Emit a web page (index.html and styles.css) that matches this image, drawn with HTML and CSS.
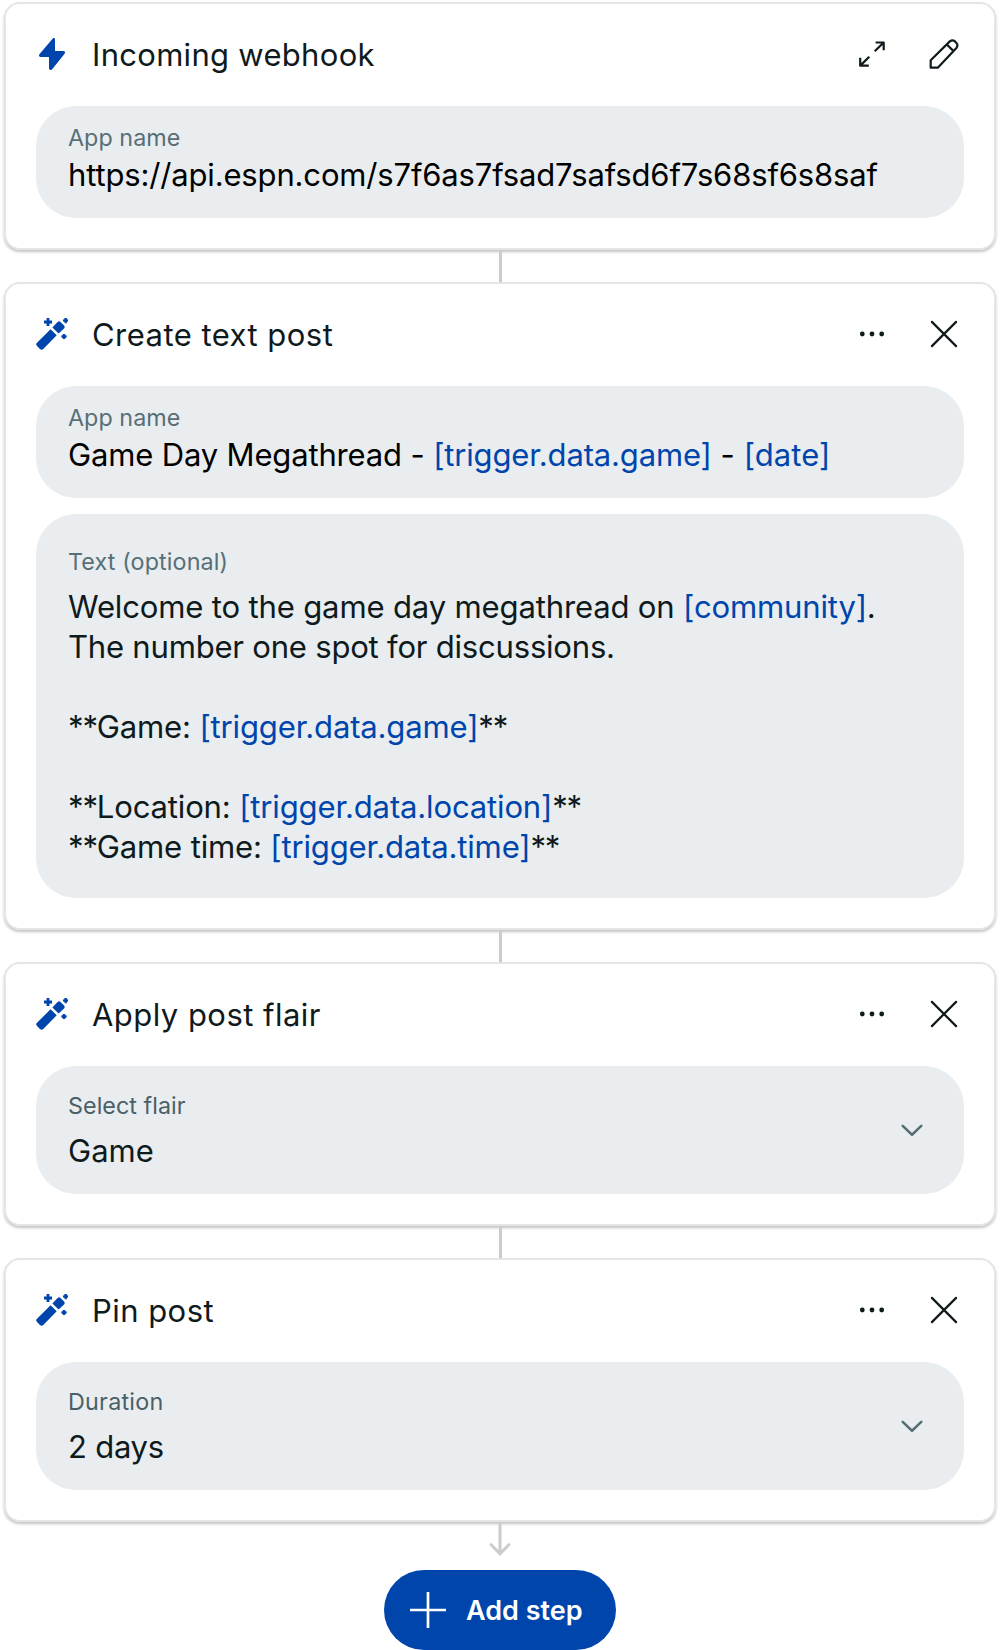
FILE: index.html
```html
<!DOCTYPE html>
<html lang="en">
<head>
<meta charset="utf-8">
<title>Automation steps</title>
<link rel="stylesheet" href="styles.css">
</head>
<body>
<svg class="defs" width="0" height="0" aria-hidden="true">
  <symbol id="wand" viewBox="0 0 32 32">
    <path d="M14.6 11.2 20.7 17.3 7.3 30.9Q5.6 32.5 3.9 30.9L1 28Q-.6 26.3 1 24.7Z"/>
    <path d="M16.4 9.4 22.6 15.6 28.1 10.5Q29.5 9 28.1 7.6L24.5 3.9Q23 2.5 21.6 3.9Z"/>
    <path d="M10.6 0h2.8v2.6H16v2.8h-2.6V8h-2.8V5.4H8V2.6h2.6z"/>
    <path d="M28.4 0h2.4l.2 1.3 1.2.2v2l-1.2.3-.3 1.4h-2l-.3-1.4-1.4-.3V1.5l1.3-.2z"/>
    <path d="M26.8 15.9h2.3l.3 1.3 1.3.3v2l-1.3.3-.3 1.3h-2.2l-.3-1.3-1.3-.3v-2l1.3-.3z"/>
  </symbol>
  <symbol id="more" viewBox="0 0 32 32">
    <circle cx="6.3" cy="16" r="2.4"/><circle cx="16" cy="16" r="2.4"/><circle cx="25.7" cy="16" r="2.4"/>
  </symbol>
  <symbol id="close" viewBox="0 0 32 32"><path d="M3.9 3.9 28.1 28.1M28.1 3.9 3.9 28.1"/></symbol>
  <symbol id="chevron" viewBox="0 0 32 32"><path d="M6.7 11.9 16 20.8 25.3 11.9"/></symbol>
</svg>

<main class="flow">
  <section class="card">
    <header class="card-head">
      <svg class="icon brand" viewBox="0 0 32 32"><path d="M16.8.5C17.6-.4 19 .1 19 1.2V13H27.3C29.1 13 29.6 14.5 28.6 15.8L16.2 31.2C15 32.6 13 32 13 30.6V19H4.9C3 19 2.5 17.4 3.4 16.2Z"/></svg>
      <h2 class="title title-webhook">Incoming webhook</h2>
      <div class="actions">
        <svg class="icon line" viewBox="0 0 32 32"><path d="M19.6 4.5H27.7V12.2M27.4 4.8 18.7 13.3M4.2 19.7V27.7H12.8M4.5 27.4 13.3 18.7"/></svg>
        <svg class="icon line" viewBox="0 0 32 32"><path d="M2.7 29.7V22.2L21.8 3.4Q24.4 1.2 27 3.4L28.4 4.9Q30.4 7.3 28.4 10L9.8 29.7ZM18.8 6.5 25.6 13.1"/></svg>
      </div>
    </header>
    <div class="field">
      <div class="label">App name</div>
      <div class="value plain">https://api.espn.com/s7f6as7fsad7safsd6f7s68sf6s8saf</div>
    </div>
  </section>

  <div class="connector"></div>

  <section class="card">
    <header class="card-head">
      <svg class="icon brand"><use href="#wand"/></svg>
      <h2 class="title">Create text post</h2>
      <div class="actions">
        <svg class="icon"><use href="#more"/></svg>
        <svg class="icon line round"><use href="#close"/></svg>
      </div>
    </header>
    <div class="field">
      <div class="label">App name</div>
      <div class="value plain">Game Day Megathread - <span class="token">[trigger.data.game]</span><span class="loose"> - <span class="token">[date]</span></span></div>
    </div>
    <div class="field area">
      <div class="label label-text">Text (optional)</div>
      <div class="body">Welcome to the game day megathread on <span class="token">[community]</span>.
<span class="snug">The number one spot for discussions.</span>

<span class="stars">**</span>Game: <span class="token">[trigger.data.game]</span><span class="stars">**</span>

<span class="stars">**</span>Location: <span class="token">[trigger.data.location]</span><span class="stars">**</span>
<span class="stars">**</span>Game time: <span class="token">[trigger.data.time]</span><span class="stars">**</span></div>
    </div>
  </section>

  <div class="connector"></div>

  <section class="card">
    <header class="card-head">
      <svg class="icon brand"><use href="#wand"/></svg>
      <h2 class="title">Apply post flair</h2>
      <div class="actions">
        <svg class="icon"><use href="#more"/></svg>
        <svg class="icon line round"><use href="#close"/></svg>
      </div>
    </header>
    <div class="field select">
      <div>
        <div class="label">Select flair</div>
        <div class="value">Game</div>
      </div>
      <svg class="icon chevron"><use href="#chevron"/></svg>
    </div>
  </section>

  <div class="connector"></div>

  <section class="card">
    <header class="card-head">
      <svg class="icon brand"><use href="#wand"/></svg>
      <h2 class="title">Pin post</h2>
      <div class="actions">
        <svg class="icon"><use href="#more"/></svg>
        <svg class="icon line round"><use href="#close"/></svg>
      </div>
    </header>
    <div class="field select">
      <div>
        <div class="label label-wide">Duration</div>
        <div class="value snug">2 days</div>
      </div>
      <svg class="icon chevron"><use href="#chevron"/></svg>
    </div>
  </section>

  <svg class="arrow" viewBox="0 0 24 48"><path d="M12 0V32M2.2 21.7 12 31.8 21.8 21.7"/></svg>

  <button class="add" type="button">
    <svg class="plus" viewBox="0 0 36 36"><path d="M18 0V36M0 18H36"/></svg>
    <span class="add-text">Add step</span>
  </button>
</main>
</body>
</html>
```
FILE: styles.css
```css
* {
  box-sizing: border-box;
}

body {
  margin: 0;
  background: #fff;
  color: #0f1a1c;
  font-family: Inter, "Liberation Sans", sans-serif;
  font-size: 31px;
}

.defs {
  display: block;
}

.flow {
  display: flex;
  flex-direction: column;
  align-items: center;
  padding: 2px 4px 0;
}

.card {
  align-self: stretch;
  padding: 30px;
  border: 2px solid #e5e5e5;
  border-radius: 16px;
  background: #fff;
  box-shadow: 0 2px 3px rgba(0, 0, 0, 0.24);
}

.card-head {
  display: flex;
  align-items: flex-start;
  height: 72px;
  padding-right: 4px;
}

.title {
  flex: 1;
  margin: 0 0 0 24px;
  font-size: 31px;
  font-weight: 400;
  line-height: 41px;
  letter-spacing: 0.46px;
}

.title-webhook {
  letter-spacing: 0.3px;
}

.actions {
  display: flex;
  gap: 40px;
}

.icon {
  display: block;
  flex: none;
  width: 32px;
  height: 32px;
  margin-top: 4px;
  fill: currentColor;
}

.brand {
  color: #0045ac;
  overflow: visible;
}

.line {
  fill: none;
  stroke: currentColor;
  stroke-width: 2.2;
  stroke-linejoin: round;
}

.round {
  stroke-linecap: round;
}

.field {
  height: 112px;
  padding: 16px 32px 0;
  border-radius: 40px;
  background: #e9edef;
}

.area {
  height: 384px;
  margin-top: 16px;
  padding-top: 32px;
}

.select {
  display: flex;
  align-items: center;
  justify-content: space-between;
  height: 128px;
  padding: 0 36px 0 32px;
}

.label {
  color: #576f76;
  font-size: 23.3px;
  line-height: 31px;
  letter-spacing: 0.05px;
}

.label-text {
  letter-spacing: 0.12px;
}

.label-wide {
  letter-spacing: 0.26px;
}

.value {
  margin-top: 1px;
  line-height: 41px;
}

.plain {
  color: #000;
  letter-spacing: -0.155px;
}

.select .label {
  color: #4a6067;
}

.select .value {
  margin-top: 9px;
}

.loose {
  letter-spacing: 0.08px;
}

.snug,
.select .snug {
  letter-spacing: -0.24px;
}

.body {
  margin-top: 10px;
  font-size: 31.1px;
  line-height: 40px;
  letter-spacing: -0.18px;
  white-space: pre-wrap;
}

.stars {
  letter-spacing: -1.2px;
}

.token {
  color: #0045ac;
}

.chevron {
  margin-top: 0;
  fill: none;
  stroke: #576f76;
  stroke-width: 2.6;
  stroke-linecap: round;
  stroke-linejoin: round;
}

.connector {
  width: 3px;
  height: 32px;
  background: #ccc;
}

.arrow {
  display: block;
  width: 24px;
  height: 48px;
  fill: none;
  stroke: #ccc;
  stroke-width: 3;
}

.add {
  display: flex;
  align-items: center;
  gap: 20px;
  width: 232px;
  height: 80px;
  padding: 0 0 0 26px;
  border: 0;
  border-radius: 40px;
  background: #0045ac;
  color: #fff;
  font: 600 27px/36px Inter, "Liberation Sans", sans-serif;
}

.add-text {
  padding-top: 2px;
}

.plus {
  width: 36px;
  height: 36px;
  stroke: #fff;
  stroke-width: 2.7;
}
```
